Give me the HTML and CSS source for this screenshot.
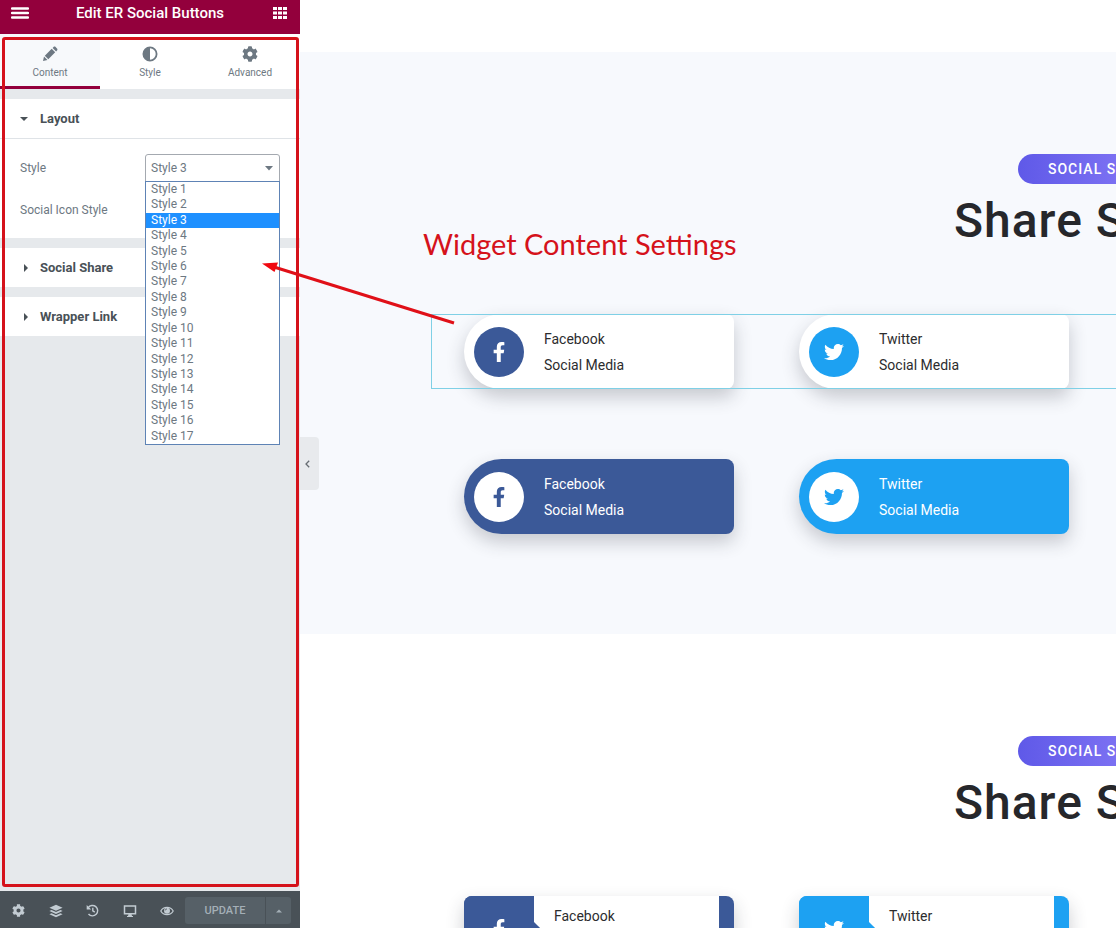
FILE: index.html
```html
<!DOCTYPE html>
<html lang="en">
<head>
<meta charset="utf-8">
<meta name="viewport" content="width=device-width, initial-scale=1">
<title>Edit ER Social Buttons</title>
<link rel="stylesheet" href="styles.css">
</head>
<body>
<svg class="sprite" aria-hidden="true">
  <symbol id="facebook" viewBox="0 0 320 512"><path d="M279.14 288l14.22-92.66h-88.91v-60.13c0-25.35 12.42-50.06 52.24-50.06h40.42V6.26S260.43 0 225.36 0c-73.22 0-121.08 44.38-121.08 124.72v70.62H22.89V288h81.39v224h100.17V288z"/></symbol>
  <symbol id="twitter" viewBox="0 0 512 512"><path d="M459.37 151.716c.325 4.548.325 9.097.325 13.645 0 138.72-105.583 298.558-298.558 298.558-59.452 0-114.68-17.219-161.137-47.106 8.447.974 16.568 1.299 25.34 1.299 49.055 0 94.213-16.568 130.274-44.832-46.132-.975-84.792-31.188-98.112-72.772 6.498.974 12.995 1.624 19.818 1.624 9.421 0 18.843-1.3 27.614-3.573-48.081-9.747-84.143-51.98-84.143-102.985v-1.299c13.969 7.797 30.214 12.67 47.431 13.319-28.264-18.843-46.781-51.005-46.781-87.391 0-19.492 5.197-37.36 14.294-52.954 51.655 63.675 129.3 105.258 216.365 109.807-1.624-7.797-2.599-15.918-2.599-24.04 0-57.828 46.782-104.934 104.934-104.934 30.213 0 57.502 12.67 76.67 33.137 23.715-4.548 46.456-13.32 66.599-25.34-7.798 24.366-24.366 44.833-46.132 57.827 21.117-2.273 41.584-8.122 60.426-16.243-14.292 20.791-32.161 39.308-52.628 54.253z"/></symbol>
  <symbol id="gear" viewBox="0 0 512 512"><path d="M487.4 315.7l-42.6-24.6c4.3-23.2 4.3-47 0-70.2l42.6-24.6c4.9-2.8 7.1-8.6 5.5-14-11.1-35.6-30-67.8-54.7-94.6-3.8-4.1-10-5.1-14.8-2.3L380.8 110c-17.9-15.4-38.5-27.3-60.8-35.1V25.8c0-5.6-3.9-10.5-9.4-11.7-36.7-8.2-74.3-7.8-109.2 0-5.5 1.2-9.4 6.1-9.4 11.7V75c-22.2 7.9-42.8 19.8-60.8 35.1L88.7 85.500c-4.9-2.8-11-1.9-14.8 2.3-24.7 26.7-43.6 58.9-54.7 94.6-1.7 5.4.6 11.2 5.5 14L67.3 221c-4.3 23.2-4.3 47 0 70.2l-42.6 24.6c-4.9 2.8-7.1 8.6-5.5 14 11.1 35.6 30 67.8 54.7 94.6 3.8 4.1 10 5.1 14.8 2.3l42.6-24.6c17.9 15.4 38.5 27.3 60.8 35.1v49.2c0 5.6 3.9 10.5 9.4 11.7 36.7 8.2 74.3 7.8 109.2 0 5.5-1.2 9.4-6.1 9.4-11.7v-49.2c22.2-7.9 42.8-19.8 60.8-35.1l42.6 24.6c4.9 2.8 11 1.9 14.8-2.3 24.7-26.7 43.6-58.9 54.7-94.6 1.5-5.5-.7-11.3-5.6-14.1zM256 336c-44.1 0-80-35.9-80-80s35.9-80 80-80 80 35.9 80 80-35.9 80-80 80z"/></symbol>
</svg>

<div class="editor">
  <aside class="panel">
    <header class="panel-header">
      <button class="icon-button" type="button" aria-label="Menu"><svg width="18" height="12" viewBox="0 0 18 12"><path d="M1 1.5h16M1 6h16M1 10.500h16" stroke="#fff" stroke-width="2.400" stroke-linecap="round"/></svg></button>
      <h1 class="panel-title">Edit ER Social Buttons</h1>
      <button class="icon-button" type="button" aria-label="Widgets"><svg width="14" height="14" viewBox="0 0 14 14"><path d="M0 1h4v3H0zM5 1h4v3H5zM10 1h4v3h-4zM0 5.500h4v3H0zM5 5.500h4v3H5zM10 5.500h4v3h-4zM0 10h4v3H0zM5 10h4v3H5zM10 10h4v3h-4z" fill="#fff"/></svg></button>
    </header>

    <nav class="tabs">
      <button class="tab tab-active" type="button">
        <svg width="16" height="16" viewBox="0 0 16 16"><path d="M1 15l1-4.500L5.500 14zM2.800 9.700L9.700 2.800l3.500 3.500-6.900 6.900zM10.600 1.900l.9-.9c.7-.6 1.500-.6 2.100 0l1.400 1.400c.6.600.6 1.400 0 2.100l-.9.900z"/></svg>
        Content
      </button>
      <button class="tab" type="button">
        <svg width="16" height="16" viewBox="0 0 16 16"><path fill-rule="evenodd" d="M8 .5a7.500 7.500 0 100 15 7.500 7.500 0 000-15zM8 2.300a5.700 5.700 0 010 11.400z"/></svg>
        Style
      </button>
      <button class="tab" type="button">
        <svg width="16" height="16"><use href="#gear"/></svg>
        Advanced
      </button>
    </nav>

    <div class="sections">
      <section class="section">
        <button class="section-toggle" type="button" aria-expanded="true"><svg width="8" height="8" viewBox="0 0 8 8"><path d="M0 2h8L4 6z"/></svg>Layout</button>
        <div class="controls">
          <div class="control">
            <label for="style">Style</label>
            <div class="select-wrap">
              <select id="style" class="select">
                <option selected>Style 3</option>
              </select>
              <svg class="select-arrow" width="8" height="5" viewBox="0 0 8 5"><path d="M0 0h8L4 4.500z"/></svg>
              <ul class="menu" role="listbox" aria-label="Style">
                <li role="option">Style 1</li>
                <li role="option">Style 2</li>
                <li role="option" class="picked" aria-selected="true">Style 3</li>
                <li role="option">Style 4</li>
                <li role="option">Style 5</li>
                <li role="option">Style 6</li>
                <li role="option">Style 7</li>
                <li role="option">Style 8</li>
                <li role="option">Style 9</li>
                <li role="option">Style 10</li>
                <li role="option">Style 11</li>
                <li role="option">Style 12</li>
                <li role="option">Style 13</li>
                <li role="option">Style 14</li>
                <li role="option">Style 15</li>
                <li role="option">Style 16</li>
                <li role="option">Style 17</li>
              </ul>
            </div>
          </div>
          <div class="control">
            <span>Social Icon Style</span>
          </div>
        </div>
      </section>
      <section class="section">
        <button class="section-toggle" type="button" aria-expanded="false"><svg width="8" height="8" viewBox="0 0 8 8"><path d="M4 0l4 4-4 4z"/></svg>Social Share</button>
      </section>
      <section class="section">
        <button class="section-toggle" type="button" aria-expanded="false"><svg width="8" height="8" viewBox="0 0 8 8"><path d="M4 0l4 4-4 4z"/></svg>Wrapper Link</button>
      </section>
    </div>

    <footer class="panel-footer">
      <button class="tool" type="button" aria-label="Settings"><svg width="13" height="13"><use href="#gear"/></svg></button>
      <button class="tool" type="button" aria-label="Navigator"><svg width="14" height="14" viewBox="0 0 14 14"><path d="M7 .8l6.600 3L7 6.800.4 3.800zM2.500 6L7 8l4.500-2 2.100 1L7 10 .4 7zM2.500 9.200l4.500 2 4.500-2 2.100 1-6.600 3-6.600-3z"/></svg></button>
      <button class="tool" type="button" aria-label="History"><svg width="13" height="13" viewBox="0 0 13 13"><path d="M2.200 3.700A5.200 5.200 0 112.500 10M6.800 3.700v3.200l2 1.300" fill="none" stroke="currentColor" stroke-width="1.400"/><path d="M.7 1v4.500h4.500z"/></svg></button>
      <button class="tool" type="button" aria-label="Responsive mode"><svg width="14" height="12" viewBox="0 0 14 12"><path d="M1.500 1h11v7.800h-11z" fill="none" stroke="currentColor" stroke-width="1.500"/><path d="M5.500 9h3l.5 2H10v1H4v-1h1z"/></svg></button>
      <button class="tool" type="button" aria-label="Preview changes"><svg width="14" height="10" viewBox="0 0 14 10"><path d="M.8 5C3.500.2 10.500.2 13.200 5 10.500 9.800 3.500 9.800.8 5z" fill="none" stroke="currentColor" stroke-width="1.200"/><circle cx="7" cy="4.700" r="3"/><path d="M5.200 4.500A1.800 1.800 0 017 2.900" fill="none" stroke="#495157" stroke-width=".8"/></svg></button>
      <div class="publish">
        <button class="update" type="button">UPDATE</button>
        <button class="update-more" type="button" aria-label="Save options"><svg width="6" height="4" viewBox="0 0 6 4"><path d="M0 3.500h6L3 .5z"/></svg></button>
      </div>
    </footer>
    <div class="highlight"></div>
    <button class="collapse" type="button" aria-label="Hide panel"><svg width="5" height="8" viewBox="0 0 5 8"><path d="M4.200.7L1 4l3.200 3.300" fill="none" stroke="#666c72" stroke-width="1.300"/></svg></button>
  </aside>

  <main class="preview">
    <section class="band band-tinted">
      <div class="heading">
        <span class="pill">SOCIAL S</span>
        <h2 class="title">Share S</h2>
      </div>
      <div class="widget widget-selected">
        <a class="card" href="#"><span class="badge facebook"><svg width="20" height="20"><use href="#facebook"/></svg></span><span class="lines"><span>Facebook</span><span>Social Media</span></span></a>
        <a class="card" href="#"><span class="badge twitter"><svg width="20" height="20"><use href="#twitter"/></svg></span><span class="lines"><span>Twitter</span><span>Social Media</span></span></a>
      </div>
      <div class="widget">
        <a class="card facebook" href="#"><span class="badge inverse-facebook"><svg width="20" height="20"><use href="#facebook"/></svg></span><span class="lines"><span>Facebook</span><span>Social Media</span></span></a>
        <a class="card twitter" href="#"><span class="badge inverse-twitter"><svg width="20" height="20"><use href="#twitter"/></svg></span><span class="lines"><span>Twitter</span><span>Social Media</span></span></a>
      </div>
      <p class="note">Widget Content Settings</p>
    </section>

    <section class="band">
      <div class="heading">
        <span class="pill">SOCIAL S</span>
        <h2 class="title">Share S</h2>
      </div>
      <div class="widget">
        <a class="card card-split facebook" href="#"><span class="tile facebook"><svg width="20" height="20"><use href="#facebook"/></svg></span><span class="lines"><span>Facebook</span></span></a>
        <a class="card card-split twitter" href="#"><span class="tile twitter"><svg width="20" height="20"><use href="#twitter"/></svg></span><span class="lines"><span>Twitter</span></span></a>
      </div>
    </section>
  </main>
  <svg class="arrow" width="196" height="64" viewBox="0 0 196 64" aria-hidden="true"><path d="M192 61L12 5" stroke="#e01018" stroke-width="3"/><path d="M0 1.500l16-1-3.500 9.500z" fill="#f00810"/></svg>
</div>
</body>
</html>
```

FILE: styles.css
```css
* {
  box-sizing: border-box;
}

body {
  margin: 0;
  font-family: Roboto, "Liberation Sans", sans-serif;
  font-size: 12px;
  color: #6d7882;
  background: #fff;
}

button {
  margin: 0;
  padding: 0;
  border: 0;
  background: none;
  font: inherit;
  color: inherit;
}

svg {
  display: block;
  flex: none;
  fill: currentColor;
}

.sprite {
  position: absolute;
  width: 0;
  height: 0;
}

.editor {
  position: relative;
  display: flex;
  height: 100vh;
  overflow: hidden;
}

/* Side panel */

.panel {
  position: relative;
  z-index: 1;
  display: flex;
  flex: none;
  flex-direction: column;
  width: 300px;
  background: #e6e9ec;
}

.panel-header {
  display: flex;
  align-items: center;
  justify-content: space-between;
  height: 34px;
  padding: 0 10px 8px;
  background: #93003c;
  color: #fff;
}

.icon-button {
  display: grid;
  place-items: center;
  width: 20px;
  height: 20px;
}

.panel-title {
  margin: 0;
  font-size: 15px;
  font-weight: 500;
  line-height: 20px;
}

.tabs {
  display: grid;
  grid-template-columns: repeat(3, 1fr);
  height: 55px;
  background: #fff;
}

.tab {
  display: flex;
  flex-direction: column;
  align-items: center;
  gap: 4px;
  padding-top: 12px;
  border-bottom: 3px solid transparent;
  font-size: 10px;
  line-height: 14px;
}

.tab-active {
  border-color: #93003c;
  background: #f7f9fb;
}

.sections {
  display: flex;
  flex: 1;
  flex-direction: column;
  gap: 10px;
  padding-top: 10px;
}

.section {
  background: #fff;
}

.section-toggle {
  display: flex;
  align-items: center;
  gap: 12px;
  width: 100%;
  height: 39px;
  padding-left: 20px;
  color: #495157;
  font-size: 13px;
  font-weight: 700;
}

.controls {
  display: flex;
  flex-direction: column;
  gap: 14px;
  padding: 15px 20px 14px;
  border-top: 1px solid #dfe3e7;
}

.control {
  display: flex;
  align-items: center;
  justify-content: space-between;
  height: 28px;
}

.select-wrap {
  position: relative;
  width: 135px;
}

.select {
  display: block;
  width: 100%;
  height: 28px;
  padding: 0 5px;
  border: 1px solid #a4a9b0;
  border-radius: 3px 3px 0 0;
  appearance: none;
  background: #fff;
  color: #6d7882;
  font: inherit;
}

.select-arrow {
  position: absolute;
  top: 12px;
  right: 7px;
}

.menu {
  position: absolute;
  top: 27px;
  left: 0;
  z-index: 1;
  display: grid;
  grid-auto-rows: 1fr;
  width: 100%;
  height: 264px;
  margin: 0;
  padding: 0;
  border: 1px solid #5e83b5;
  background: #fff;
  list-style: none;
  line-height: 15px;
}

.menu li {
  padding-left: 5px;
}

.menu .picked {
  background: #1e90ff;
  color: #fff;
}

.panel-footer {
  display: flex;
  align-items: center;
  height: 37px;
  padding-top: 2px;
  background: #495157;
  color: #c2cbd2;
}

.tool {
  display: grid;
  place-items: center;
  width: 37px;
  height: 35px;
}

.publish {
  display: flex;
  gap: 1px;
  height: 27px;
  color: #a4afb7;
}

.update {
  width: 80px;
  border-radius: 3px 0 0 3px;
  background: #566067;
  font-size: 11px;
  font-weight: 500;
}

.update-more {
  display: grid;
  place-items: center;
  width: 25px;
  border-radius: 0 3px 3px 0;
  background: #566067;
}

.highlight {
  position: absolute;
  inset: 37px 1px 41px 2px;
  border: 3px solid #d5121b;
  border-radius: 3px;
  pointer-events: none;
}

.collapse {
  position: absolute;
  top: 437px;
  left: 100%;
  display: flex;
  align-items: center;
  width: 19px;
  height: 53px;
  padding-left: 5px;
  border-radius: 0 4px 4px 0;
  background: #e8eaed;
}

/* Page preview */

.preview {
  flex: 1;
  min-width: 0;
  overflow: hidden;
}

.band {
  position: relative;
  padding: 102px 0 100px 131px;
}

.band-tinted {
  margin-top: 52px;
  background: #f7f9fd;
}

.heading {
  display: flex;
  flex-direction: column;
  padding-left: 523px;
}

.pill {
  height: 30px;
  margin-left: 64px;
  padding-left: 30px;
  border-radius: 15px 0 0 15px;
  background: linear-gradient(90deg, #5f59e8, #7b70f2);
  color: #fff;
  font-size: 14px;
  font-weight: 500;
  letter-spacing: 1px;
  line-height: 30px;
  white-space: nowrap;
}

.title {
  margin: 7px 0 63px;
  color: #26272b;
  font-size: 48px;
  font-weight: 500;
  letter-spacing: 1px;
  line-height: 60px;
  white-space: nowrap;
}

.widget {
  display: grid;
  grid-template-columns: repeat(2, 270px);
  gap: 65px;
  padding: 0 33px;
}

.widget + .widget {
  margin-top: 70px;
}

.widget-selected {
  outline: 1px solid #7fd0e6;
  outline-offset: -1px;
  margin-right: -2px;
}

.card {
  display: flex;
  align-items: center;
  gap: 20px;
  height: 75px;
  padding-left: 10px;
  border-radius: 38px 8px 8px 38px;
  background: #fff;
  box-shadow: 0 8px 18px rgba(40, 45, 60, 0.24);
  color: #2c2c2e;
  font-size: 14px;
  line-height: 26px;
  text-decoration: none;
}

.card-split {
  height: 65px;
  padding: 0 15px 0 0;
  gap: 0;
  border-radius: 8px;
}

.facebook {
  background: #3b5998;
  color: #fff;
}

.twitter {
  background: #1da1f2;
  color: #fff;
}

.badge {
  display: grid;
  flex: none;
  place-items: center;
  width: 50px;
  height: 50px;
  border-radius: 50%;
}

.inverse-facebook {
  background: #fff;
  color: #3b5998;
}

.inverse-twitter {
  background: #fff;
  color: #1da1f2;
}

.lines {
  display: flex;
  flex-direction: column;
}

.tile {
  position: relative;
  display: grid;
  flex: none;
  place-items: center;
  width: 70px;
  height: 65px;
  border-radius: 8px 4px 4px 8px;
}

.tile::after {
  content: "";
  position: absolute;
  top: 28px;
  right: -5px;
  width: 10px;
  height: 10px;
  background: inherit;
  transform: rotate(45deg);
}

.card-split .lines {
  flex: 1;
  height: 65px;
  padding: 7px 20px;
  background: #fff;
  color: #2c2c2e;
}

/* Annotation over the canvas */

.note {
  position: absolute;
  top: 174px;
  left: 123px;
  margin: 0;
  color: #d5121b;
  font-family: Lato, "Open Sans", sans-serif;
  font-size: 29px;
  line-height: 36px;
  white-space: nowrap;
}

.arrow {
  position: absolute;
  top: 262px;
  left: 262px;
  z-index: 2;
}
```
